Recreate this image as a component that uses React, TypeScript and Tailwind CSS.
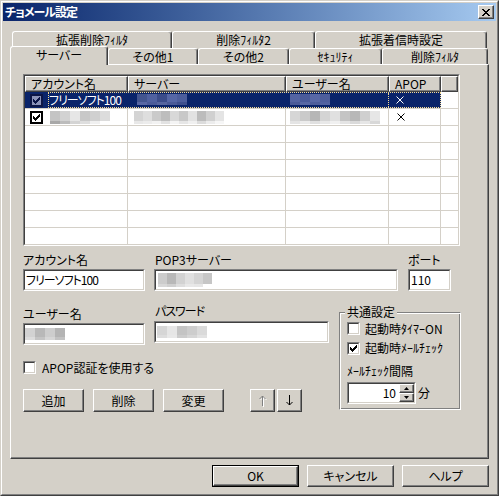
import React from "react";

const FONT = "font-['Noto_Sans_CJK_JP',sans-serif] [font-feature-settings:'palt']";

type Cell = [string, string];

function Check({ color = "#000" }: { color?: string }) {
  const tops = [2, 3, 4, 3, 2, 1, 0];
  return (
    <svg width="7" height="7" viewBox="0 0 7 7" shapeRendering="crispEdges">
      {tops.map((t, i) => (
        <rect key={i} x={i} y={t} width="1" height="3" fill={color} />
      ))}
    </svg>
  );
}

function CheckBox({ checked }: { checked?: boolean }) {
  return (
    <div className="w-[13px] h-[13px] shrink-0 border border-t-[#808080] border-l-[#808080] border-r-white border-b-white">
      <div className="w-full h-full border border-t-[#404040] border-l-[#404040] border-r-[#d4d0c8] border-b-[#d4d0c8] bg-white flex items-center justify-center">
        {checked && <Check />}
      </div>
    </div>
  );
}

function ListCheck({ selected }: { selected?: boolean }) {
  return selected ? (
    <div className="w-[13px] h-[13px] border-2 border-[#0c1646] bg-[#8a92b8] flex items-center justify-center">
      <Check color="#0a1446" />
    </div>
  ) : (
    <div className="w-[13px] h-[13px] border-2 border-black bg-white flex items-center justify-center">
      <Check />
    </div>
  );
}

function Button({ className, children }: { className: string; children?: React.ReactNode }) {
  return (
    <div
      className={`flex items-center justify-center bg-[#d4d0c8] border border-t-white border-l-white border-r-[#404040] border-b-[#404040] shadow-[inset_-1px_-1px_0_#808080] ${className}`}
    >
      {children}
    </div>
  );
}

function Sunken({ className, children }: { className: string; children?: React.ReactNode }) {
  return (
    <div className={`border border-t-[#808080] border-l-[#808080] border-r-white border-b-white ${className}`}>
      <div className="w-full h-full border border-t-[#404040] border-l-[#404040] border-r-[#d4d0c8] border-b-[#d4d0c8] bg-white flex items-center">
        {children}
      </div>
    </div>
  );
}

function Mosaic({ cells, w = 10, h = 11 }: { cells: Cell[]; w?: number; h?: number }) {
  return (
    <div className="flex">
      {cells.map(([top, bottom], i) => (
        <div key={i} className="flex flex-col">
          <div style={{ background: top, width: w, height: h - 3 }} />
          <div style={{ background: bottom, width: w, height: 3 }} />
        </div>
      ))}
    </div>
  );
}

function Cross({ color }: { color: string }) {
  return (
    <svg width="8" height="8" viewBox="0 0 8 8">
      <path d="M0.5 0.5 L7.5 7.5 M7.5 0.5 L0.5 7.5" stroke={color} strokeWidth="1" />
    </svg>
  );
}

function Arrow({ down, disabled }: { down?: boolean; disabled?: boolean }) {
  const d = down ? "M3.5 0 V10 M0.5 7 L3.5 10 L6.5 7" : "M3.5 11 V1 M0.5 4 L3.5 1 L6.5 4";
  return (
    <svg width="8" height="12" viewBox="0 0 8 12">
      {disabled && <path d={d} transform="translate(1 1)" stroke="#ffffff" fill="none" strokeWidth="1" />}
      <path d={d} stroke={disabled ? "#808080" : "#000"} fill="none" strokeWidth="1" />
    </svg>
  );
}

function Tab({ className, children }: { className: string; children: React.ReactNode }) {
  return (
    <div
      className={`flex justify-center pt-[1px] bg-[#d4d0c8] border-t border-l border-r border-t-white border-l-white border-r-[#404040] rounded-t-[3px] shadow-[inset_-1px_0_0_#808080] ${className}`}
    >
      {children}
    </div>
  );
}

const navyA: Cell[] = [
  ["#43558f", "#5867a4"],
  ["#5061a0", "#4b5b99"],
  ["#3b4c8a", "#56659f"],
  ["#5667a6", "#4a5a97"],
  ["#4d5e9c", "#3e4f8d"],
];
const navyB: Cell[] = [
  ["#5464a2", "#4a5a98"],
  ["#4a5b9a", "#5868a4"],
  ["#5868a6", "#4d5d9b"],
  ["#4e5e9c", "#5262a0"],
];
const grayA: Cell[] = [
  ["#c4c4c4", "#a8a8a8"],
  ["#d2d2d2", "#bcbcbc"],
  ["#e6e6e6", "#d4d4d4"],
  ["#c8c8c8", "#dedede"],
  ["#d0d0d0", "#f0f0f0"],
  ["#dcdcdc", "#ffffff"],
];
const grayB: Cell[] = [
  ["#d4d4d4", "#e8e8e8"],
  ["#dedede", "#ececec"],
  ["#cacaca", "#f2f2f2"],
  ["#bdbdbd", "#e2e2e2"],
  ["#d8d8d8", "#f4f4f4"],
  ["#c8c8c8", "#e6e6e6"],
  ["#e2e2e2", "#f0f0f0"],
  ["#bcbcbc", "#dcdcdc"],
  ["#d0d0d0", "#ececec"],
  ["#e4e4e4", "#f6f6f6"],
];
const grayC: Cell[] = [
  ["#d6d6d6", "#e4e4e4"],
  ["#cacaca", "#ececec"],
  ["#b6b6b6", "#e0e0e0"],
  ["#d4d4d4", "#e8e8e8"],
  ["#e0e0e0", "#f0f0f0"],
  ["#c4c4c4", "#e4e4e4"],
  ["#b8b8b8", "#dadada"],
  ["#cfcfcf", "#e6e6e6"],
  ["#e6e6e6", "#d8d8d8"],
];
const inPop: Cell[] = [
  ["#cccccc", "#d8d8d8"],
  ["#b8b8b8", "#d0d0d0"],
  ["#d2d2d2", "#dedede"],
  ["#e0e0e0", "#e8e8e8"],
  ["#d4d4d4", "#e6e6e6"],
  ["#c6c6c6", "#ffffff"],
];
const inUser: Cell[] = [
  ["#d2d2d2", "#dcdcdc"],
  ["#b8b8b8", "#c4c4c4"],
  ["#cdcdcd", "#d6d6d6"],
  ["#b4b4b4", "#c2c2c2"],
];
const inPass: Cell[] = [
  ["#d6d6d6", "#dddddd"],
  ["#e6e6e6", "#e8e8e8"],
  ["#c4c4c4", "#cccccc"],
  ["#cdcdcd", "#d6d6d6"],
  ["#dadada", "#e2e2e2"],
];

const emptyRows = [0, 1, 2, 3, 4, 5, 6];

export default function App() {
  return (
    <div className={`w-[499px] h-[496px] ${FONT} text-[12px] leading-[14px] text-black`}>
      <div className="w-full h-full border border-t-[#d4d0c8] border-l-[#d4d0c8] border-r-[#404040] border-b-[#404040]">
        <div className="w-full h-full flex flex-col p-[1px] bg-[#d4d0c8] border border-t-white border-l-white border-r-[#808080] border-b-[#808080]">
          {/* title bar */}
          <div className="h-[18px] shrink-0 flex items-center pl-[2px] pr-[2px] bg-gradient-to-r from-[#0a246a] to-[#a6caf0]">
            <span className="font-bold text-white tracking-[-1px]">チョメール設定</span>
            <Button className="ml-auto w-[16px] h-[14px]">
              <svg width="8" height="7" viewBox="0 0 8 7" shapeRendering="crispEdges">
                <path d="M0 0h2v1h-2z M6 0h2v1h-2z M1 1h2v1h-2z M5 1h2v1h-2z M2 2h4v1h-4z M3 3h2v1h-2z M2 4h4v1h-4z M1 5h2v1h-2z M5 5h2v1h-2z M0 6h2v1h-2z M6 6h2v1h-2z" fill="#000" />
              </svg>
            </Button>
          </div>

          {/* body */}
          <div className="flex-1 px-[7px] pt-[10px]">
            <div className="flex h-[17px] pl-[2px]">
              <Tab className="w-[160px] h-full">拡張削除ﾌｨﾙﾀ</Tab>
              <Tab className="w-[143px] h-full">削除ﾌｨﾙﾀ2</Tab>
              <Tab className="w-[172px] h-full">拡張着信時設定</Tab>
            </div>
            <div className="relative z-10 flex items-end h-[16px]">
              <Tab className="w-[98px] h-[19px] -mb-[1px]">サーバー</Tab>
              <Tab className="w-[90px] h-[16px]">その他1</Tab>
              <Tab className="w-[91px] h-[16px]">その他2</Tab>
              <Tab className="w-[93px] h-[16px]">ｾｷｭﾘﾃｨ</Tab>
              <Tab className="w-[106px] h-[16px]">削除ﾌｨﾙﾀ</Tab>
            </div>

            {/* panel */}
            <div className="h-[395px] border border-t-white border-l-white border-r-[#404040] border-b-[#404040] shadow-[inset_-1px_-1px_0_#808080]">
              {/* list view */}
              <div className="ml-[12px] mt-[9px] w-[437px] h-[172px] border border-t-[#808080] border-l-[#808080] border-r-white border-b-white">
                <div className="w-full h-full overflow-hidden bg-white border border-t-[#404040] border-l-[#404040] border-r-[#d4d0c8] border-b-[#d4d0c8]">
                  <div className="flex h-[16px]">
                    {[
                      ["w-[103px]", "アカウント名"],
                      ["w-[158px]", "サーバー"],
                      ["w-[103px]", "ユーザー名"],
                      ["w-[52px]", "APOP"],
                      ["w-[17px]", ""],
                    ].map(([w, t], i) => (
                      <div
                        key={i}
                        className={`${w} h-full pl-[5px] bg-[#d4d0c8] border border-t-white border-l-white border-r-[#404040] border-b-[#404040] shadow-[inset_-1px_-1px_0_#808080] whitespace-nowrap overflow-hidden`}
                      >
                        {t}
                      </div>
                    ))}
                  </div>

                  {/* row 1, selected */}
                  <div className="flex h-[17px] border-b border-[#d4d0c8]">
                    <div className="flex w-[416px] h-[16px] bg-[#0a246a] text-white">
                      <div className="w-[23px] pl-[5px] flex items-center">
                        <ListCheck selected />
                      </div>
                      <div className="flex flex-1 border border-dotted border-[#f5db95]">
                        <div className="w-[79px] whitespace-nowrap tracking-[-1px]">フリーソフト100</div>
                        <div className="w-[158px] pl-[9px] pt-[1px]">
                          <Mosaic cells={navyA} />
                        </div>
                        <div className="w-[103px] pl-[4px] pt-[1px] border-r border-dotted border-[#f5db95]">
                          <Mosaic cells={navyB} />
                        </div>
                        <div className="flex-1 pl-[7px] flex items-center">
                          <Cross color="#ffffff" />
                        </div>
                      </div>
                    </div>
                  </div>

                  {/* row 2 */}
                  <div className="flex h-[17px] border-b border-[#d4d0c8]">
                    <div className="w-[103px] h-full border-r border-[#d4d0c8] flex items-center pl-[5px]">
                      <ListCheck />
                      <div className="ml-[7px]">
                        <Mosaic cells={grayA} h={13} />
                      </div>
                    </div>
                    <div className="w-[158px] h-full border-r border-[#d4d0c8] pl-[6px] pt-[2px]">
                      <Mosaic cells={grayB} w={9} h={13} />
                    </div>
                    <div className="w-[103px] h-full border-r border-[#d4d0c8] pl-[4px] pt-[2px]">
                      <Mosaic cells={grayC} w={10} h={13} />
                    </div>
                    <div className="w-[52px] h-full border-r border-[#d4d0c8] pl-[8px] flex items-center">
                      <Cross color="#000000" />
                    </div>
                  </div>

                  {emptyRows.map((r) => (
                    <div key={r} className="flex h-[17px] border-b border-[#d4d0c8]">
                      <div className="w-[103px] h-full border-r border-[#d4d0c8]" />
                      <div className="w-[158px] h-full border-r border-[#d4d0c8]" />
                      <div className="w-[103px] h-full border-r border-[#d4d0c8]" />
                      <div className="w-[52px] h-full border-r border-[#d4d0c8]" />
                    </div>
                  ))}
                </div>
              </div>

              {/* account / server / port */}
              <div className="flex items-start ml-[12px] mt-[7px]">
                <div className="w-[122px]">
                  <div>アカウント名</div>
                  <Sunken className="mt-[2px] h-[22px]">
                    <span className="pl-[1px] whitespace-nowrap tracking-[-1px]">フリーソフト100</span>
                  </Sunken>
                </div>
                <div className="ml-[9px] w-[244px]">
                  <div className="pl-[1px]">POP3サーバー</div>
                  <Sunken className="mt-[2px] h-[22px]">
                    <div className="pl-[2px]">
                      <Mosaic cells={inPop} w={9} h={14} />
                    </div>
                  </Sunken>
                </div>
                <div className="ml-[10px] w-[43px]">
                  <div>ポート</div>
                  <Sunken className="mt-[2px] h-[22px]">
                    <span className="pl-[1px]">110</span>
                  </Sunken>
                </div>
              </div>

              {/* lower section */}
              <div className="flex items-start ml-[12px] mt-[12px]">
                <div className="w-[306px]">
                  <div className="flex items-start">
                    <div className="w-[122px] pt-[4px]">
                      <div>ユーザー名</div>
                      <Sunken className="mt-[2px] h-[22px]">
                        <div className="pl-[0px]">
                          <Mosaic cells={inUser} w={10} h={12} />
                        </div>
                      </Sunken>
                    </div>
                    <div className="ml-[9px] w-[175px] pt-[1px]">
                      <div className="pl-[1px] tracking-[-1px]">パスワード</div>
                      <Sunken className="mt-[3px] h-[22px]">
                        <div className="pl-[1px]">
                          <Mosaic cells={inPass} w={10} h={12} />
                        </div>
                      </Sunken>
                    </div>
                  </div>

                  <div className="flex items-center h-[13px] mt-[16px]">
                    <CheckBox />
                    <span className="ml-[6px] whitespace-nowrap">APOP認証を使用する</span>
                  </div>

                  <div className="flex items-center mt-[15px]">
                    <Button className="w-[61px] h-[23px]">追加</Button>
                    <Button className="ml-[9px] w-[61px] h-[23px]">削除</Button>
                    <Button className="ml-[9px] w-[61px] h-[23px]">変更</Button>
                    <Button className="ml-[26px] w-[25px] h-[23px]">
                      <Arrow disabled />
                    </Button>
                    <Button className="ml-[2px] w-[25px] h-[23px]">
                      <Arrow down />
                    </Button>
                  </div>
                </div>

                <fieldset className="ml-[10px] mt-[2px] w-[122px] px-[7px] pb-[5px] border border-t-[#808080] border-l-[#808080] border-r-white border-b-white shadow-[inset_1px_1px_0_#ffffff,inset_-1px_-1px_0_#808080]">
                  <legend className="-ml-[2px] px-[2px] bg-[#d4d0c8] leading-[14px]">共通設定</legend>
                  <div className="flex items-center h-[19px]">
                    <CheckBox />
                    <span className="ml-[5px] whitespace-nowrap">起動時ﾀｲﾏｰON</span>
                  </div>
                  <div className="flex items-center h-[20px]">
                    <CheckBox checked />
                    <span className="ml-[5px] whitespace-nowrap">起動時ﾒｰﾙﾁｪｯｸ</span>
                  </div>
                  <div className="mt-[6px] whitespace-nowrap">ﾒｰﾙﾁｪｯｸ間隔</div>
                  <div className="flex items-center mt-[4px]">
                    <Sunken className="w-[69px] h-[22px]">
                      <div className="flex w-full h-full">
                        <div className="flex-1 flex items-center justify-end pr-[3px]">10</div>
                        <div className="w-[15px] h-full flex flex-col">
                          <Button className="w-full h-[9px]">
                            <svg width="5" height="3" viewBox="0 0 5 3">
                              <path d="M2.5 0 L5 3 L0 3 Z" fill="#000" />
                            </svg>
                          </Button>
                          <Button className="w-full h-[9px]">
                            <svg width="5" height="3" viewBox="0 0 5 3">
                              <path d="M0 0 L5 0 L2.5 3 Z" fill="#000" />
                            </svg>
                          </Button>
                        </div>
                      </div>
                    </Sunken>
                    <span className="ml-[2px]">分</span>
                  </div>
                </fieldset>
              </div>
            </div>

            {/* dialog buttons */}
            <div className="flex justify-end gap-[8px] mt-[6px]">
              <div className="w-[87px] h-[22px] border border-black">
                <Button className="w-full h-full">OK</Button>
              </div>
              <Button className="w-[87px] h-[22px]">キャンセル</Button>
              <Button className="w-[87px] h-[22px]">ヘルプ</Button>
            </div>
          </div>
        </div>
      </div>
    </div>
  );
}
